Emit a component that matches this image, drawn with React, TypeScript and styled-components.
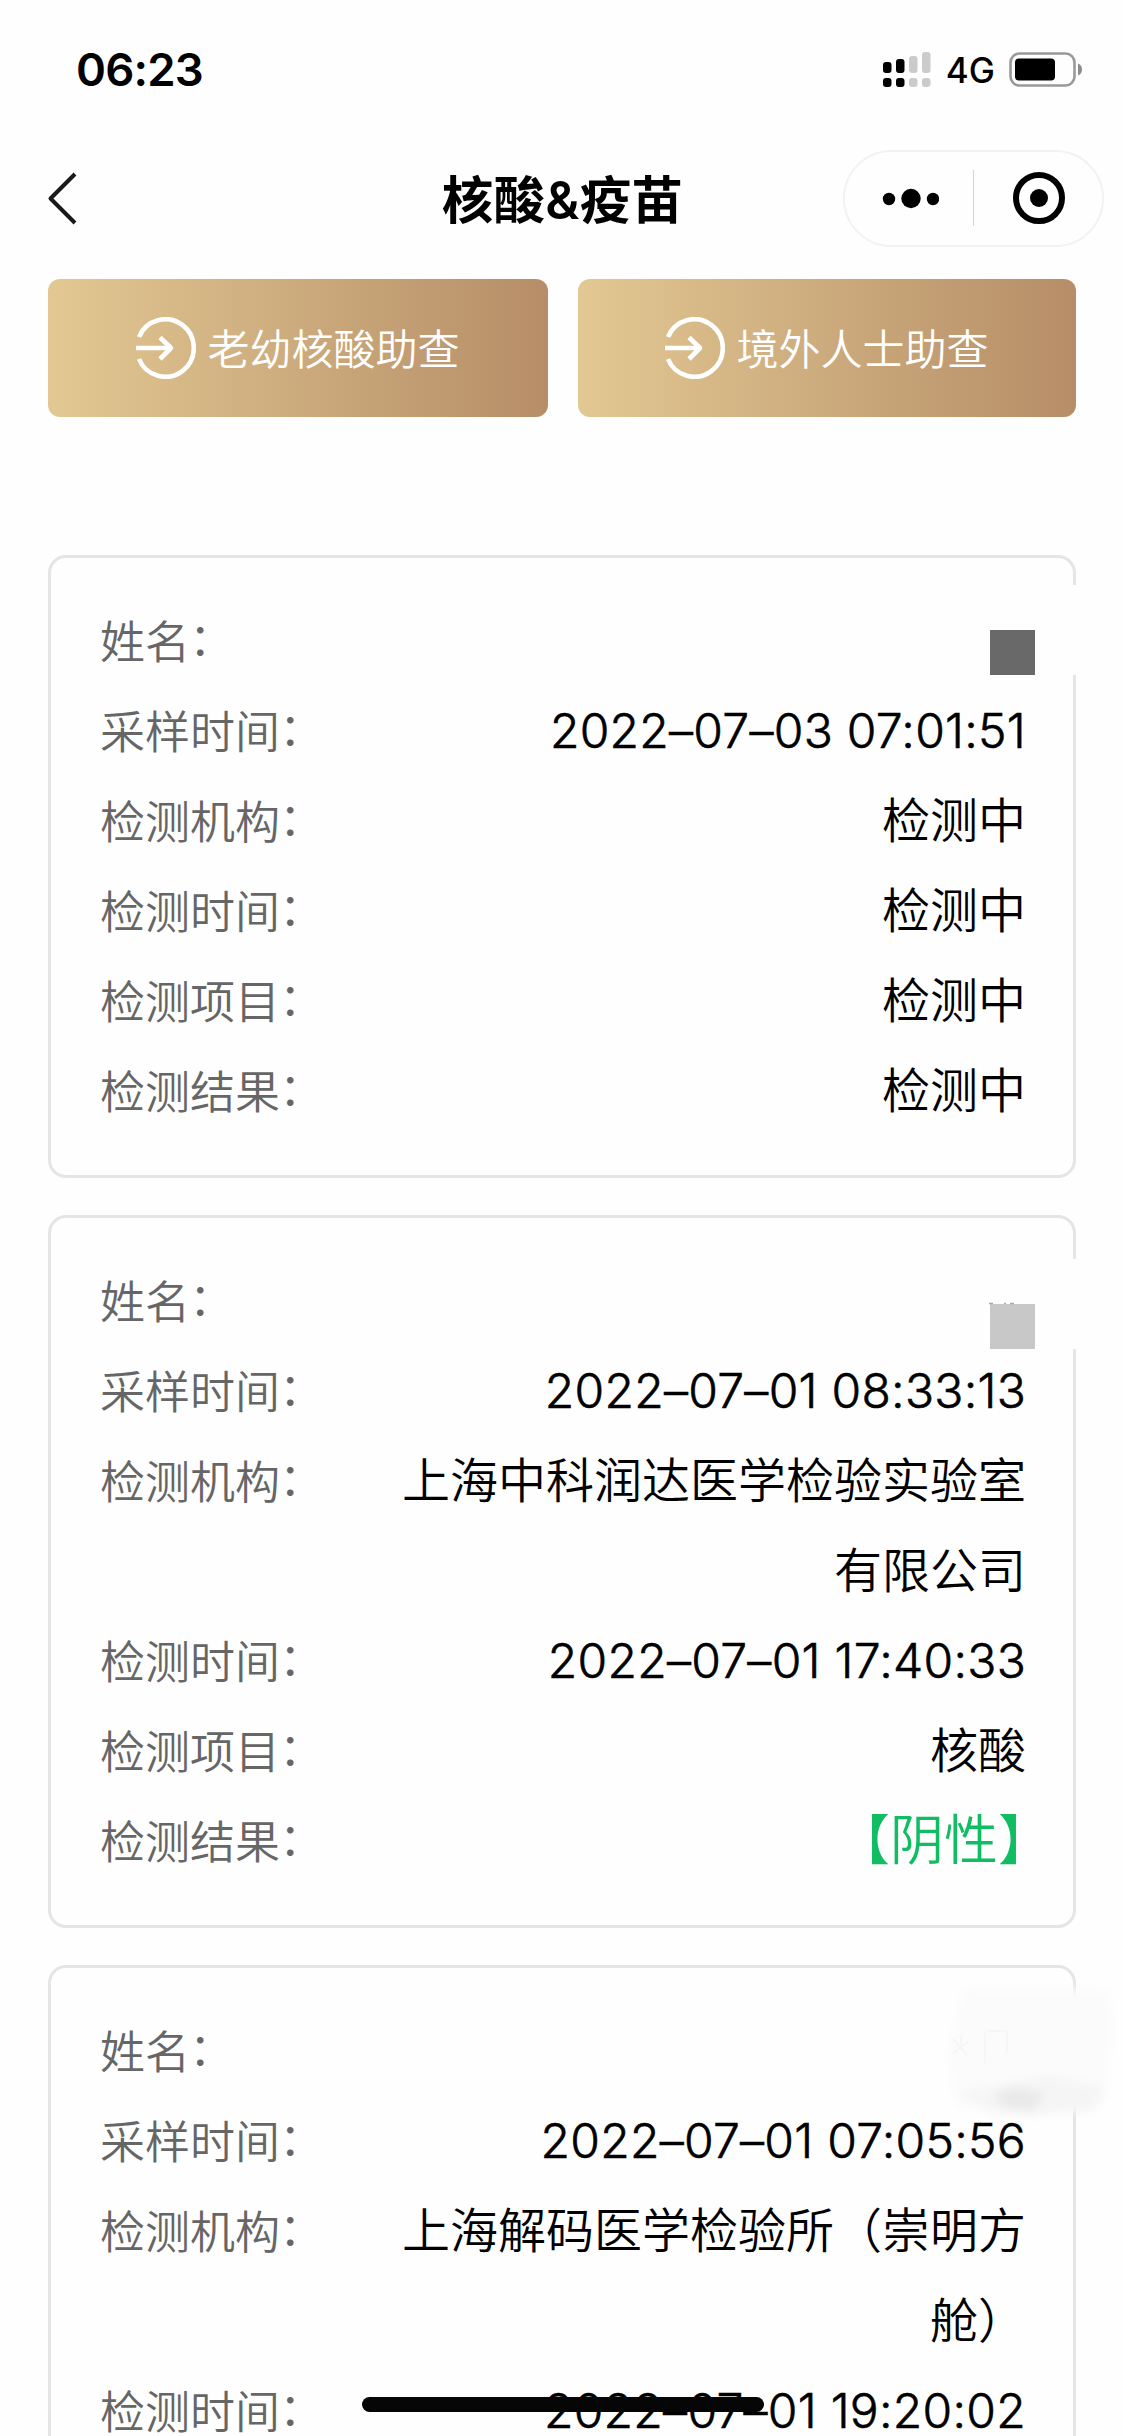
import React from "react";
import styled, { createGlobalStyle } from "styled-components";

const latin = `Inter, "Noto Sans CJK SC", sans-serif`;
const han = `"Noto Sans CJK SC", sans-serif`;

const GlobalStyle = createGlobalStyle`
  * { box-sizing: border-box; }
  html, body { margin: 0; padding: 0; background: #fefefe; }
`;

const Screen = styled.div`
  position: relative;
  width: 1125px;
  height: 2436px;
  overflow: hidden;
  background: #fefefe;
  color: #000;
  font-family: ${latin};
  display: flex;
  flex-direction: column;
`;

const StatusBar = styled.header`
  height: 140px;
  flex: none;
  display: flex;
  align-items: center;
  justify-content: space-between;
  padding: 0 42px 0 76px;
`;

const Clock = styled.time`
  font-size: 45.5px;
  font-weight: 600;
  line-height: 56px;
  letter-spacing: -0.8px;
`;

const StatusIcons = styled.div`
  display: flex;
  align-items: center;
`;

const Network = styled.span`
  font-size: 35px;
  font-weight: 500;
  line-height: 42px;
  margin: 0 14px 0 15px;
`;

const NavBar = styled.nav`
  height: 117px;
  flex: none;
  display: grid;
  grid-template-columns: 282px 1fr 282px;
  align-items: center;
  padding-bottom: 1px;
`;

const BackButton = styled.button`
  border: 0;
  padding: 0;
  margin-left: 46px;
  background: none;
  width: 34px;
  height: 56px;
  display: block;
`;

const Title = styled.h1`
  margin: 0;
  padding-top: 3px;
  text-align: center;
  font-family: ${latin};
  font-size: 51.5px;
  font-weight: 600;
  letter-spacing: 0.3px;
  line-height: 60px;
  white-space: nowrap;
`;

const Capsule = styled.div`
  width: 261px;
  height: 97px;
  border: 2px solid #f2f2f2;
  border-radius: 49px;
  display: grid;
  grid-template-columns: 128px 1px 1fr;
  align-items: center;
`;

const CapsuleDivider = styled.span`
  height: 56px;
  background: #d4d4d4;
`;

const CapsuleAction = styled.button`
  border: 0;
  padding: 0 0 0 2px;
  background: none;
  display: flex;
  justify-content: center;
`;

const Actions = styled.div`
  flex: none;
  display: grid;
  grid-template-columns: 500px 498px;
  gap: 30px;
  padding: 22px 0 0 48px;
`;

const ActionButton = styled.button`
  height: 138px;
  border: 0;
  border-radius: 12px;
  padding: 0 1px 0 0;
  display: flex;
  align-items: center;
  justify-content: center;
  gap: 11px;
  color: #fff;
  background: linear-gradient(90deg, #e2c893, #b68d67);
  font-family: ${han};
  font-size: 42px;
  font-weight: 350;
  line-height: 60px;
`;

const ActionText = styled.span`
  padding-bottom: 3px;
`;

const Records = styled.main`
  flex: none;
  display: flex;
  flex-direction: column;
  gap: 37px;
  padding: 138px 49px 0 48px;
`;

const Card = styled.section`
  position: relative;
  border: 3px solid #e5e5e5;
  border-radius: 18px;
  padding: 38px 47px 39px 49px;
`;

const Row = styled.div`
  display: flex;
  justify-content: space-between;
  min-height: 90px;
`;

const Label = styled.span`
  height: 90px;
  font-family: ${han};
  font-size: 45px;
  font-weight: 350;
  line-height: 87px;
  color: #666;
  white-space: nowrap;
`;

const Colon = styled.span`
  line-height: 0;
  vertical-align: 3px;
  margin-left: -1px;
`;

const Value = styled.span<{ $negative?: boolean; $latin?: boolean }>`
  max-width: 640px;
  margin-right: ${(p) => (p.$negative ? -26 : 0)}px;
  text-align: right;
  font-size: ${(p) => (p.$negative ? 54 : 48)}px;
  font-weight: 350;
  letter-spacing: ${(p) => (p.$latin ? 0.28 : 0)}px;
  -webkit-text-stroke: ${(p) => (p.$latin ? 0.6 : 0)}px currentColor;
  line-height: 90px;
  color: ${(p) => (p.$negative ? "#10bd62" : "#000")};
`;

const Mask = styled.span<{ $top: number }>`
  position: absolute;
  right: -6px;
  top: ${(p) => p.$top}px;
  width: 120px;
  height: 90px;
  background: #fefefe;
`;

const Block = styled.span<{ $top: number; $color: string }>`
  position: absolute;
  right: 38px;
  top: ${(p) => p.$top}px;
  width: 45px;
  height: 45px;
  background: ${(p) => p.$color};
`;

const Specks = styled.svg`
  position: absolute;
  right: 58px;
  top: 84px;
`;

const Smudge = styled.svg`
  position: absolute;
  right: -48px;
  top: 7px;
`;

const HomeIndicator = styled.div`
  position: absolute;
  left: 362px;
  top: 2397px;
  width: 402px;
  height: 15px;
  border-radius: 8px;
  background: #060606;
`;

const SignalIcon = () => (
  <svg width="48" height="36" viewBox="0 0 48 36">
    {[
      [0, 11, "#000"],
      [13, 14, "#000"],
      [26, 17, "#cbcbcb"],
      [39, 21, "#cbcbcb"],
    ].map(([x, h, fill]) => (
      <g key={x} fill={fill as string}>
        <rect x={x} y={21 - (h as number)} width="8.5" height={h} rx="3" />
        <rect x={x} y="26" width="8.5" height="9" rx="3" />
      </g>
    ))}
  </svg>
);

const BatteryIcon = () => (
  <svg width="74" height="36" viewBox="0 0 74 36">
    <rect x="1.5" y="1.5" width="64" height="32" rx="9" fill="none" stroke="#999" strokeWidth="2.6" />
    <rect x="6" y="6.5" width="40" height="22" rx="4" fill="#000" />
    <path d="M69 11.5c2.600 1 4 3.200 4 6s-1.400 5-4 6z" fill="#8c8c8c" />
  </svg>
);

const EnterIcon = () => (
  <svg width="61" height="62" viewBox="0 0 61 62" fill="none" stroke="#fff" strokeWidth="4.600">
    <path d="M4 20A28.500 28.800 0 1 1 4 42" />
    <path d="M1 31H37" />
    <path d="M25 20.500L36 31L25 42" strokeLinejoin="round" />
  </svg>
);

const SmudgeMark = () => (
  <Smudge width="180" height="152" viewBox="0 0 180 152">
    <defs>
      <filter id="soft" x="-20%" y="-20%" width="140%" height="140%">
        <feGaussianBlur stdDeviation="5" />
      </filter>
    </defs>
    <g filter="url(#soft)">
      <path d="M22 14H168L172 60L162 130L16 134L6 80Z" fill="#fbfbfb" />
      <path d="M14 118L70 108L108 100L166 114L152 136L96 140L52 138Z" fill="#f5f5f5" />
      <path d="M52 120L74 112L104 118L92 136L64 132Z" fill="#e9e9e9" />
    </g>
    <path d="M12 64L26 80M28 66L12 78M20 60V72M46 56H66M66 56V78M44 58V88" stroke="#f6f6f6" strokeWidth="2" fill="none" />
  </Smudge>
);

type Field = { label: string; value?: string; negative?: boolean };

const fields = (rows: Field[]) =>
  rows.map((f) => (
    <Row key={f.label}>
      <Label>
        {f.label}
        <Colon>：</Colon>
      </Label>
      {f.value && (
        <Value $negative={f.negative} $latin={/^\d/.test(f.value)}>
          {f.value}
        </Value>
      )}
    </Row>
  ));

export default function App() {
  return (
    <>
      <GlobalStyle />
      <Screen>
        <StatusBar>
          <Clock>06:23</Clock>
          <StatusIcons>
            <SignalIcon />
            <Network>4G</Network>
            <BatteryIcon />
          </StatusIcons>
        </StatusBar>
        <NavBar>
          <BackButton aria-label="返回">
            <svg width="34" height="56" viewBox="0 0 34 56" fill="none" stroke="#1a1a1a" strokeWidth="4">
              <path d="M29 4L4.500 28.500L29 53" strokeLinejoin="round" />
            </svg>
          </BackButton>
          <Title>核酸&amp;疫苗</Title>
          <Capsule>
            <CapsuleAction>
              <svg width="58" height="22" viewBox="0 0 58 22">
                <circle cx="8" cy="12" r="6.200" />
                <circle cx="30" cy="11.500" r="9.700" />
                <circle cx="52" cy="12" r="6.200" />
              </svg>
            </CapsuleAction>
            <CapsuleDivider />
            <CapsuleAction>
              <svg width="54" height="54" viewBox="0 0 54 54">
                <circle cx="27" cy="27" r="23" fill="none" stroke="#000" strokeWidth="6" />
                <circle cx="27" cy="27" r="9" />
              </svg>
            </CapsuleAction>
          </Capsule>
        </NavBar>
        <Actions>
          <ActionButton>
            <EnterIcon />
            <ActionText>老幼核酸助查</ActionText>
          </ActionButton>
          <ActionButton>
            <EnterIcon />
            <ActionText>境外人士助查</ActionText>
          </ActionButton>
        </Actions>
        <Records>
          <Card>
            {fields([
              { label: "姓名" },
              { label: "采样时间", value: "2022–07–03 07:01:51" },
              { label: "检测机构", value: "检测中" },
              { label: "检测时间", value: "检测中" },
              { label: "检测项目", value: "检测中" },
              { label: "检测结果", value: "检测中" },
            ])}
            <Mask $top={27} />
            <Block $top={72} $color="#696969" />
          </Card>
          <Card>
            {fields([
              { label: "姓名" },
              { label: "采样时间", value: "2022–07–01 08:33:13" },
              { label: "检测机构", value: "上海中科润达医学检验实验室有限公司" },
              { label: "检测时间", value: "2022–07–01 17:40:33" },
              { label: "检测项目", value: "核酸" },
              { label: "检测结果", value: "【阴性】", negative: true },
            ])}
            <Mask $top={41} />
            <Block $top={86} $color="#c8c8c8" />
            <Specks width="26" height="3" viewBox="0 0 26 3">
              <path d="M0 1.500H4M15 1.500H17M21 1.500H25" stroke="#aaa" strokeWidth="1.500" />
            </Specks>
          </Card>
          <Card>
            {fields([
              { label: "姓名" },
              { label: "采样时间", value: "2022–07–01 07:05:56" },
              { label: "检测机构", value: "上海解码医学检验所（崇明方舱）" },
              { label: "检测时间", value: "2022–07–01 19:20:02" },
            ])}
            <SmudgeMark />
          </Card>
        </Records>
        <HomeIndicator />
      </Screen>
    </>
  );
}
